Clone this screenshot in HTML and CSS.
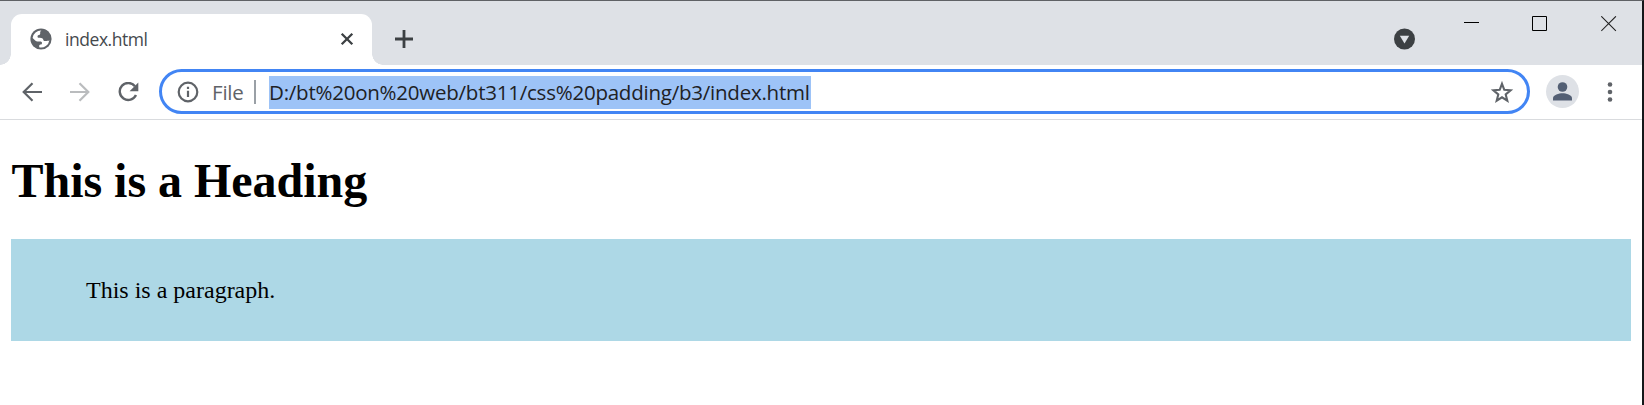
FILE: index.html
```html
<!DOCTYPE html>
<html lang="en">
<head>
<meta charset="utf-8">
<title>index.html</title>
<link rel="stylesheet" href="styles.css">
</head>
<body>
<div class="window">
  <header class="tab-strip">
    <div class="tab">
      <svg class="globe" width="22" height="22" viewBox="0 0 22 22"><circle cx="11" cy="11" r="10.6" fill="#5f6368"/><path d="M11.400 2.600c-.9.5-1.300 1.300-1.200 2.300.1 1.100-.2 1.900-1.300 2.100-1.300.2-1.500 1-1.300 1.900.1.700 1 .900 2.200.900 2 0 3.300.8 3.600 2.100.3 1.100 1.100 1.200 2.300 1.100 1.500 0 2.500-.2 3.700-.8A8.500 8.500 0 0 1 9.200 19.300v-1.500c0-.8.6-1.400 1.500-1.400 1 0 1.300-.7 1.300-1.500 0-1-.7-1.500-1.800-1.500H7.300c-1.100 0-1.900-.7-2.600-1.400l-2.100-2A8.500 8.500 0 0 1 11.400 2.600z" fill="#fff"/></svg>
      <span class="tab-title">index.html</span>
      <svg class="tab-close" width="14" height="14" viewBox="0 0 14 14"><path d="M1.700 1.700l10.600 10.600M12.300 1.700L1.700 12.300" stroke="#3c4043" stroke-width="2.300"/></svg>
    </div>
    <svg class="new-tab" width="20" height="20" viewBox="0 0 20 20"><path d="M10 1v18M1 10h18" stroke="#3c4043" stroke-width="2.800"/></svg>
    <svg class="tab-search" width="22" height="22" viewBox="0 0 22 22"><circle cx="10.500" cy="11" r="10.500" fill="#3c4043"/><path d="M5.800 7.800h9.400l-4.700 7.600z" fill="#dee1e6"/></svg>
    <div class="controls">
      <svg width="15" height="16" viewBox="0 0 15 16"><path d="M0 6.500h15" stroke="#000"/></svg>
      <svg width="16" height="16" viewBox="0 0 16 16"><path d="M.5.5h14v14H.5z" fill="none" stroke="#000"/></svg>
      <svg width="16" height="16" viewBox="0 0 16 16"><path d="M.3.3l14.600 14.600M14.900.3L.3 14.900" stroke="#222" stroke-width="1.100"/></svg>
    </div>
  </header>
  <nav class="toolbar">
    <svg class="back" width="20" height="20" viewBox="0 0 20 20"><path d="M20 10H1.800M10.500 1.200L1.700 10l8.800 8.800" fill="none" stroke="#5f6368" stroke-width="2.200"/></svg>
    <svg class="forward" width="20" height="20" viewBox="0 0 20 20"><path d="M0 10h18.200M9.500 1.200l8.800 8.800-8.800 8.800" fill="none" stroke="#babcbe" stroke-width="2.200"/></svg>
    <svg class="reload" width="22" height="20" viewBox="0 0 22 20"><path d="M17 4.300A8.500 8.500 0 1 0 18 13" fill="none" stroke="#5f6368" stroke-width="2.400"/><path d="M20.300.6v8.700h-8.700z" fill="#5f6368"/></svg>
    <div class="omnibox">
      <svg class="info" width="22" height="22" viewBox="0 0 22 22"><circle cx="11" cy="11" r="9.300" fill="none" stroke="#5f6368" stroke-width="2.200"/><path d="M11 9.800v6.200M11 5.800v2.300" stroke="#5f6368" stroke-width="2.200"/></svg>
      <span class="scheme">File</span>
      <span class="divider"></span>
      <span class="url">D:/bt%20on%20web/bt311/css%20padding/b3/index.html</span>
      <svg class="star" width="24" height="24" viewBox="0 0 24 24"><path d="M12 3.800l2.300 6 6.300.5-4.900 4.100 1.600 6.300-5.300-3.400-5.300 3.400 1.600-6.300-4.900-4.100 6.300-.5z" fill="none" stroke="#5f6368" stroke-width="2.100"/></svg>
    </div>
    <svg class="avatar" width="33" height="33" viewBox="0 0 33 33"><circle cx="16.500" cy="16.500" r="16.500" fill="#dee1e6"/><circle cx="16.500" cy="12" r="4.800" fill="#535f74"/><path d="M7 25.500v-2.300c0-3.500 6-5 9.500-5s9.500 1.500 9.500 5v2.300z" fill="#535f74"/></svg>
    <svg class="menu" width="6" height="20" viewBox="0 0 6 20"><g fill="#5f6368"><circle cx="3" cy="2.500" r="2.300"/><circle cx="3" cy="10" r="2.300"/><circle cx="3" cy="17.500" r="2.300"/></g></svg>
  </nav>
  <main class="page">
    <h1 class="heading">This is a Heading</h1>
    <p class="paragraph">This is a paragraph.</p>
  </main>
</div>
</body>
</html>
```
FILE: styles.css
```css
* { box-sizing: border-box; }
body { margin: 0; background: #fff; }
svg { display: block; flex: none; }
.window {
  width: 1644px;
  height: 405px;
  overflow: hidden;
  border-top: 1px solid #5f6165;
  border-right: 2px solid #15171a;
  font-family: "Open Sans", "Noto Sans", sans-serif;
}
.tab-strip {
  display: flex;
  height: 64px;
  padding: 13px 0 0 11px;
  background: #dee1e6;
}
.tab {
  position: relative;
  display: flex;
  align-items: center;
  width: 361px;
  height: 51px;
  padding: 0 18px 1px 19px;
  border-radius: 11px 11px 0 0;
  background: #fff;
}
.tab::before,
.tab::after {
  content: "";
  position: absolute;
  bottom: 0;
  width: 11px;
  height: 11px;
}
.tab::before {
  left: -11px;
  background: radial-gradient(circle at 0 0, #dee1e6 10.5px, #fff 11px);
}
.tab::after {
  right: -11px;
  background: radial-gradient(circle at 100% 0, #dee1e6 10.5px, #fff 11px);
}
.tab-title {
  margin-left: 13px;
  font-size: 17.5px;
  line-height: 24px;
  letter-spacing: -0.45px;
  color: #45494d;
}
.tab-close { margin-left: auto; }
.new-tab { margin: 15px 0 0 22px; }
.tab-search { margin: 14px 0 0 auto; }
.controls {
  display: flex;
  gap: 53px;
  width: 226px;
  padding: 2px 0 0 48px;
}
.toolbar {
  display: flex;
  align-items: center;
  height: 55px;
  padding: 0 29px 1px 22px;
  border-bottom: 1px solid #d9dbde;
}
.forward { margin-left: 28px; }
.reload { margin-left: 28px; }
.omnibox {
  display: flex;
  align-items: center;
  width: 1371px;
  height: 45px;
  margin-left: 19px;
  padding: 0 13px 0 15px;
  border: 3px solid #4285f4;
  border-radius: 23px;
  white-space: nowrap;
}
.scheme {
  width: 42px;
  margin-left: 13px;
  font-size: 20.5px;
  letter-spacing: -0.2px;
  color: #5f6368;
}
.divider {
  width: 2px;
  height: 24px;
  background: #9aa0a6;
}
.url {
  width: 542px;
  height: 33px;
  margin: 1px 0 0 13px;
  font-size: 20.5px;
  line-height: 33px;
  letter-spacing: -0.23px;
  color: #202124;
  background: #9dc3f7;
}
.star { margin-left: auto; }
.avatar { margin-left: 16px; }
.menu { margin-left: 28px; }
.page {
  padding: 30px 11px 0;
  font-family: "Liberation Serif", serif;
  color: #000;
}
.heading {
  margin: 0;
  padding-left: 0.5px;
  font-size: 48px;
  line-height: 62px;
  font-weight: 700;
  letter-spacing: -0.03px;
}
.paragraph {
  height: 102px;
  margin: 27px 0 0;
  padding: 37px 75px;
  font-size: 24px;
  line-height: 28px;
  background: #add8e6;
}
```
